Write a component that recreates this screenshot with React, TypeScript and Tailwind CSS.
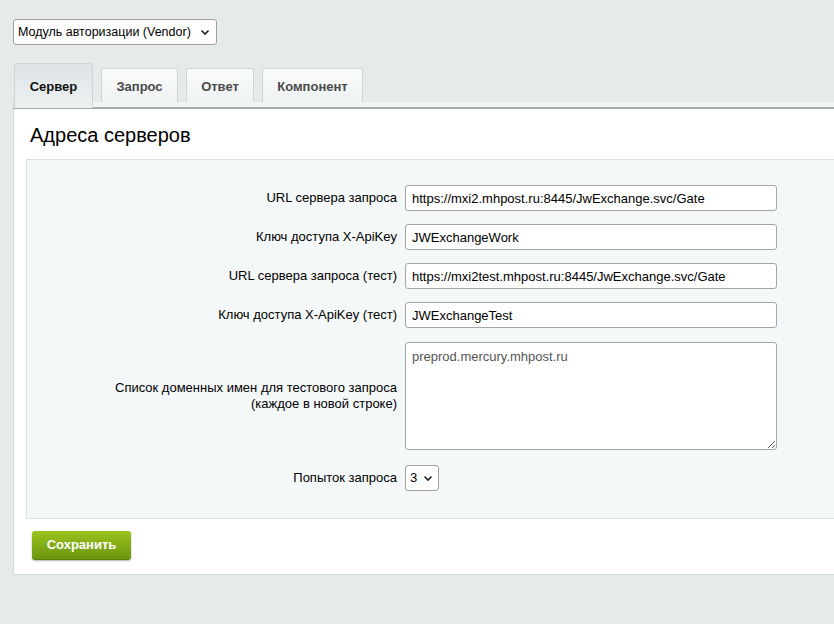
import React from "react";

const font = { fontFamily: '"Liberation Sans", Arial, sans-serif' };

function Chevron() {
  return (
    <svg width="10" height="7" viewBox="0 0 10 7" className="shrink-0">
      <path d="M1.5 1.5 L5 5 L8.5 1.5" fill="none" stroke="#222" strokeWidth="1.6" />
    </svg>
  );
}

function Row({ label, value }: { label: string; value: string }) {
  return (
    <div className="flex items-center">
      <div className="w-[378px] pr-[8px] text-right text-[13px] text-black">{label}</div>
      <input
        defaultValue={value}
        className="h-[26px] w-[372px] rounded-[3px] border border-[#a6a6a6] bg-white px-[6px] text-[13px] text-black outline-none"
        style={font}
      />
    </div>
  );
}

export default function App() {
  return (
    <div className="min-h-[624px] w-full bg-[#e5eaeb] pt-[19px]" style={font}>
      <div className="ml-[13px] flex h-[26px] w-[204px] items-center justify-between rounded-[3px] border border-[#a0a0a0] bg-white pl-[4px] pr-[6px] text-[12.5px] text-black">
        <span>Модуль авторизации (Vendor)</span>
        <Chevron />
      </div>

      <div className="mt-[18px] flex items-end gap-[8px] pl-[14px]">
        <div className="relative z-10 -mb-[6px] flex h-[45px] w-[79px] items-start justify-center rounded-t-[3px] border border-b-0 border-[#cfd6d8] bg-gradient-to-b from-[#dde4e6] to-[#eef1f2] pt-[13px] text-[13px] font-bold text-[#111]">
          Сервер
        </div>
        <div className="flex h-[34px] w-[77px] items-start justify-center rounded-t-[3px] border border-b-0 border-[#cfd6d8] bg-gradient-to-b from-[#fbfcfc] to-[#eef1f2] pt-[8px] text-[13px] font-bold text-[#4a4a4a]">
          Запрос
        </div>
        <div className="flex h-[34px] w-[68px] items-start justify-center rounded-t-[3px] border border-b-0 border-[#cfd6d8] bg-gradient-to-b from-[#fbfcfc] to-[#eef1f2] pt-[8px] text-[13px] font-bold text-[#4a4a4a]">
          Ответ
        </div>
        <div className="flex h-[34px] w-[101px] items-start justify-center rounded-t-[3px] border border-b-0 border-[#cfd6d8] bg-gradient-to-b from-[#fbfcfc] to-[#eef1f2] pt-[8px] text-[13px] font-bold text-[#4a4a4a]">
          Компонент
        </div>
      </div>
      <div className="ml-[13px] h-[7px] border-b-2 border-l border-b-[#a2abad] border-l-[#cfd6d8] bg-[#f1f4f5]" />

      <div className="ml-[13px] border-b border-l border-[#d3dadc] bg-white pb-[14px]">
        <div className="pl-[16px] pt-[14px] pb-[12px] text-[20px] leading-[24px] text-black">Адреса серверов</div>
        <div className="ml-[12px] border-y border-l border-[#dbe1e3] bg-[#f5f8f9] pt-[25px] pb-[27px]">
          <div className="flex flex-col gap-[13px]">
            <Row label="URL сервера запроса" value="https://mxi2.mhpost.ru:8445/JwExchange.svc/Gate" />
            <Row label="Ключ доступа X-ApiKey" value="JWExchangeWork" />
            <Row label="URL сервера запроса (тест)" value="https://mxi2test.mhpost.ru:8445/JwExchange.svc/Gate" />
            <Row label="Ключ доступа X-ApiKey (тест)" value="JWExchangeTest" />
          </div>
          <div className="mt-[14px] flex items-center">
            <div className="w-[378px] pr-[8px] text-right text-[13px] leading-[16px] text-black">
              Список доменных имен для тестового запроса
              <br />
              (каждое в новой строке)
            </div>
            <textarea
              defaultValue="preprod.mercury.mhpost.ru"
              className="block h-[108px] w-[372px] rounded-[3px] border border-[#a6a6a6] bg-white px-[6px] pt-[4px] text-[13px] text-[#555] outline-none"
              style={font}
            />
          </div>
          <div className="mt-[15px] flex items-center">
            <div className="w-[378px] pr-[8px] text-right text-[13px] text-black">Попыток запроса</div>
            <div className="flex h-[26px] w-[34px] items-center justify-between rounded-[3px] border border-[#a0a0a0] bg-white pl-[4px] pr-[5px] text-[13px] text-black">
              <span>3</span>
              <Chevron />
            </div>
          </div>
        </div>
        <div className="ml-[18px] mt-[12px] flex h-[29px] w-[99px] items-center justify-center rounded-[3px] border-b border-[#5a7f0c] bg-gradient-to-b from-[#9bc21d] to-[#6b970f] text-[13px] font-bold text-white shadow-[0_1px_2px_rgba(0,0,0,0.3)]">
          Сохранить
        </div>
      </div>
    </div>
  );
}
